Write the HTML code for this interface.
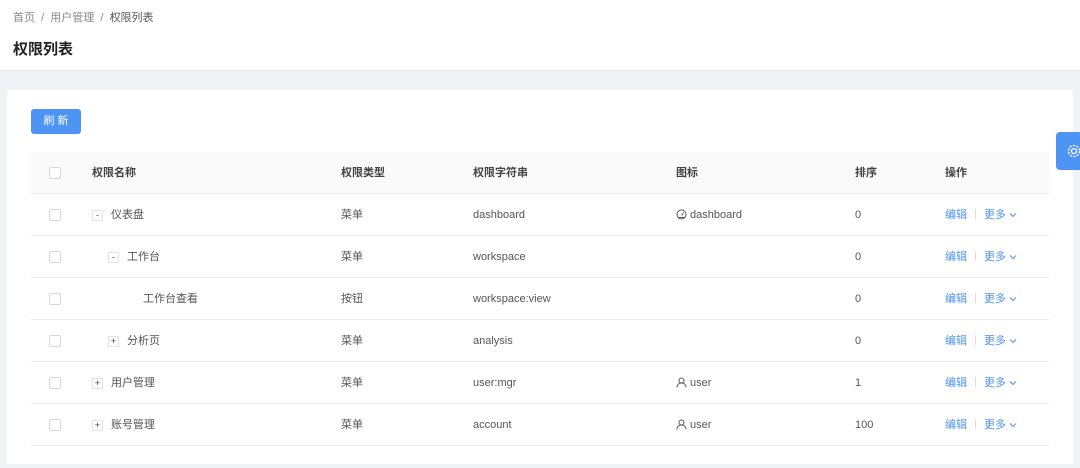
<!DOCTYPE html>
<html><head><meta charset="utf-8"><style>
*{margin:0;padding:0;box-sizing:border-box}
body{width:1080px;height:468px;background:#f0f2f5;font-family:"Liberation Sans","Noto Sans CJK SC",sans-serif;font-size:11px;color:#555;position:relative;overflow:hidden}
.hd{position:absolute;left:0;top:0;width:1080px;height:71px;background:#fff;border-bottom:1px solid #e8e8e8}
.bc{position:absolute;left:13px;top:9px;font-size:11px;color:#888}
.bc b{font-weight:normal;color:#555}
.tt{position:absolute;left:13px;top:38px;font-size:15px;font-weight:bold;color:#222}
.card{position:absolute;left:7px;top:90px;width:1066px;height:374px;background:#fff}
.btn{position:absolute;left:31px;top:109px;width:50px;height:25px;background:#4e94f5;border-radius:3px;color:#fff;font-size:11px;text-align:center;line-height:25px;letter-spacing:3px;padding-left:3px}
.tb{position:absolute;left:31px;top:152px;width:1018px}
.r{position:relative;height:42px;border-bottom:1px solid #ececec}
.r.h{height:42px;background:#fafafa;font-weight:bold;color:#444}
.c{position:absolute;top:0;line-height:42px;white-space:nowrap}
.cb{position:absolute;left:18px;top:15px;width:12px;height:12px;border:1px solid #d9d9d9;border-radius:2px;background:#fff}
.ex{display:inline-block;width:11px;height:11px;border:1px solid #e4e4e4;font-size:9px;line-height:9px;text-align:center;margin-right:8px;vertical-align:0px;color:#444}
.a{color:#4e94f5}
.sep{display:inline-block;width:1px;height:10px;background:#ddd;margin:0 8px;vertical-align:-1px}
.gear{position:absolute;left:1056px;top:132px;width:30px;height:38px;background:#4e94f5;border-radius:4px 0 0 4px}
svg.i{vertical-align:-2px;margin-right:3px}
</style></head><body>
<div class="hd"><div class="bc">首页 &nbsp;/ &nbsp;用户管理 &nbsp;/ &nbsp;<b>权限列表</b></div><div class="tt">权限列表</div></div>
<div class="card"></div>
<div class="btn">刷新</div>
<div class="gear"><svg width="30" height="38" viewBox="0 0 30 38"><circle cx="18" cy="19" r="2.5" fill="none" stroke="#fff" stroke-width="1.3"/><circle cx="18" cy="19" r="5.5" fill="none" stroke="#fff" stroke-width="1.3" stroke-dasharray="2.3 1.2"/></svg></div>
<div class="tb">
<div class="r h"><div class="cb"></div><div class="c" style="left:61px">权限名称</div><div class="c" style="left:310px">权限类型</div><div class="c" style="left:442px">权限字符串</div><div class="c" style="left:645px">图标</div><div class="c" style="left:824px">排序</div><div class="c" style="left:914px">操作</div></div>
<div class="r"><div class="cb"></div><div class="c" style="left:61px"><span class="ex">-</span>仪表盘</div><div class="c" style="left:310px">菜单</div><div class="c" style="left:442px">dashboard</div><div class="c" style="left:645px"><svg class="i" width="11" height="11" viewBox="0 0 11 11" fill="none" stroke="#555" stroke-width="1"><circle cx="5.5" cy="5.5" r="4.5"/><path d="M5.5 6.5L7.5 3.5M2.5 8.5h6"/></svg>dashboard</div><div class="c" style="left:824px">0</div><div class="c a" style="left:914px">编辑<span class="sep"></span>更多 <svg width="8" height="6" viewBox="0 0 8 6"><path d="M1 1.5l3 3 3-3" fill="none" stroke="#4e94f5"/></svg></div></div>
<div class="r"><div class="cb"></div><div class="c" style="left:77px"><span class="ex">-</span>工作台</div><div class="c" style="left:310px">菜单</div><div class="c" style="left:442px">workspace</div><div class="c" style="left:824px">0</div><div class="c a" style="left:914px">编辑<span class="sep"></span>更多 <svg width="8" height="6" viewBox="0 0 8 6"><path d="M1 1.5l3 3 3-3" fill="none" stroke="#4e94f5"/></svg></div></div>
<div class="r"><div class="cb"></div><div class="c" style="left:112px">工作台查看</div><div class="c" style="left:310px">按钮</div><div class="c" style="left:442px">workspace:view</div><div class="c" style="left:824px">0</div><div class="c a" style="left:914px">编辑<span class="sep"></span>更多 <svg width="8" height="6" viewBox="0 0 8 6"><path d="M1 1.5l3 3 3-3" fill="none" stroke="#4e94f5"/></svg></div></div>
<div class="r"><div class="cb"></div><div class="c" style="left:77px"><span class="ex">+</span>分析页</div><div class="c" style="left:310px">菜单</div><div class="c" style="left:442px">analysis</div><div class="c" style="left:824px">0</div><div class="c a" style="left:914px">编辑<span class="sep"></span>更多 <svg width="8" height="6" viewBox="0 0 8 6"><path d="M1 1.5l3 3 3-3" fill="none" stroke="#4e94f5"/></svg></div></div>
<div class="r"><div class="cb"></div><div class="c" style="left:61px"><span class="ex">+</span>用户管理</div><div class="c" style="left:310px">菜单</div><div class="c" style="left:442px">user:mgr</div><div class="c" style="left:645px"><svg class="i" width="11" height="11" viewBox="0 0 11 11" fill="none" stroke="#555" stroke-width="1"><circle cx="5.5" cy="3.5" r="2.5"/><path d="M1 10.5c0-3 2-4.5 4.5-4.5s4.5 1.5 4.5 4.5"/></svg>user</div><div class="c" style="left:824px">1</div><div class="c a" style="left:914px">编辑<span class="sep"></span>更多 <svg width="8" height="6" viewBox="0 0 8 6"><path d="M1 1.5l3 3 3-3" fill="none" stroke="#4e94f5"/></svg></div></div>
<div class="r"><div class="cb"></div><div class="c" style="left:61px"><span class="ex">+</span>账号管理</div><div class="c" style="left:310px">菜单</div><div class="c" style="left:442px">account</div><div class="c" style="left:645px"><svg class="i" width="11" height="11" viewBox="0 0 11 11" fill="none" stroke="#555" stroke-width="1"><circle cx="5.5" cy="3.5" r="2.5"/><path d="M1 10.5c0-3 2-4.5 4.5-4.5s4.5 1.5 4.5 4.5"/></svg>user</div><div class="c" style="left:824px">100</div><div class="c a" style="left:914px">编辑<span class="sep"></span>更多 <svg width="8" height="6" viewBox="0 0 8 6"><path d="M1 1.5l3 3 3-3" fill="none" stroke="#4e94f5"/></svg></div></div>
</div>
</body></html>
